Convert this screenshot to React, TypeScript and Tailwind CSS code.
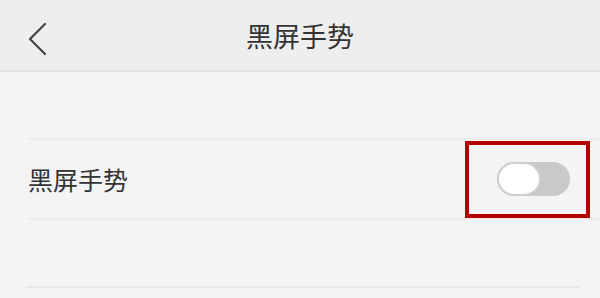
import React from "react";

export default function App() {
  return (
    <div
      className="w-[600px] h-[298px] bg-[#f4f4f4] overflow-hidden"
      style={{ fontFamily: '"Noto Sans CJK SC", "Noto Sans", sans-serif' }}
    >
      <div className="h-[72px] bg-[#eeeeee] border-b-2 border-[#e2e2e2] relative flex items-center justify-center">
        <svg
          className="absolute left-[26px] top-[22px]"
          width="22"
          height="34"
          viewBox="0 0 22 34"
          fill="none"
        >
          <path d="M19 2 L4 17 L19 32" stroke="#444" strokeWidth="2.2" strokeLinecap="round" strokeLinejoin="round" />
        </svg>
        <span className="text-[27px] text-[#333] leading-none">黑屏手势</span>
      </div>
      <div className="h-[66px]" />
      <div className="ml-[28px] border-t-2 border-[#ececec]" />
      <div className="ml-[28px] h-[78px] flex items-center justify-between pr-[10px]">
        <span className="text-[25px] text-[#333] leading-none">黑屏手势</span>
        <div className="w-[125px] h-[77px] border-[4px] border-[#b40000] flex items-center justify-end pr-[16px]">
          <div className="w-[73px] h-[34px] rounded-full bg-[#c9c9c9] flex items-center">
            <div className="w-[44px] h-[34px] rounded-full bg-white border-2 border-[#cfcfcf]" />
          </div>
        </div>
      </div>
      <div className="ml-[28px] border-t-2 border-[#ececec]" />
      <div className="h-[66px]" />
      <div className="ml-[26px] mr-[20px] border-t-2 border-[#e8e8e8]" />
    </div>
  );
}
